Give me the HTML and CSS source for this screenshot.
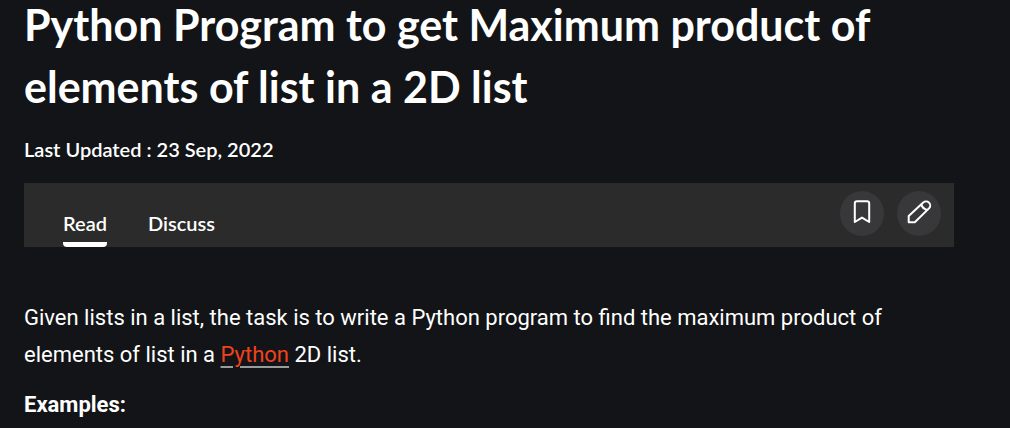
FILE: index.html
```html
<!DOCTYPE html>
<html lang="en">
<head>
<meta charset="utf-8">
<meta name="viewport" content="width=device-width, initial-scale=1">
<title>Python Program to get Maximum product of elements of list in a 2D list</title>
<link rel="stylesheet" href="styles.css">
</head>
<body>
<main class="article">
  <h1 class="title">Python Program to get Maximum product of elements of list in a 2D list</h1>
  <p class="updated">Last Updated : 23 Sep, 2022</p>
  <div class="toolbar">
    <nav class="tabs">
      <a class="tab tab-active" href="#read">Read</a>
      <a class="tab" href="#discuss">Discuss</a>
    </nav>
    <div class="actions">
      <button class="action" type="button" aria-label="Bookmark">
        <svg class="icon" viewBox="0 0 26 26" aria-hidden="true"><path d="M5.8 23V4.4q0-2.2 2.2-2.2h10q2.2 0 2.2 2.2V23L13 18.6z"/></svg>
      </button>
      <button class="action" type="button" aria-label="Edit">
        <svg class="icon" viewBox="0 0 26 26" aria-hidden="true"><path d="M2.7 23.3V17L17.2 3.6a4.1 4.1 0 0 1 5.8 5.8L8.8 23.3zM15.4 5.3q.8 4.4 6 5.7"/></svg>
      </button>
    </div>
  </div>
  <section class="content" id="read">
    <p class="text">Given lists in a list, the task is to write a Python program to find the maximum product of elements of list in a <a class="link" href="#python">Python</a> 2D list.</p>
    <p class="text"><strong>Examples:</strong></p>
  </section>
</main>
</body>
</html>
```
FILE: styles.css
```css
* {
  box-sizing: border-box;
}

body {
  margin: 0;
  background: #131417;
  color: #fff;
  font-family: Lato, "Liberation Sans", sans-serif;
}

.article {
  padding: 0 56px 0 24px;
}

.title {
  margin: -6px 0 0;
  padding-bottom: 14px;
  font-size: 43px;
  font-weight: 700;
  line-height: 62px;
}

.updated {
  margin: 0;
  padding: 5px 0 21px;
  font-size: 20px;
  font-weight: 600;
  line-height: 25px;
}

.toolbar {
  display: flex;
  justify-content: space-between;
  align-items: stretch;
  height: 64px;
  padding: 0 13px 0 39px;
  background: #2b2b2b;
}

.tabs {
  display: flex;
  align-items: flex-end;
  gap: 41px;
}

.tab {
  padding-bottom: 6px;
  border-bottom: 5px solid transparent;
  border-radius: 0 0 4px 4px;
  color: #fff;
  font-size: 20px;
  font-weight: 600;
  line-height: 25px;
  text-decoration: none;
}

.tab-active {
  border-bottom-color: #fff;
}

.actions {
  display: flex;
  align-items: center;
  gap: 13px;
  padding-bottom: 3px;
}

.action {
  display: flex;
  align-items: center;
  justify-content: center;
  width: 44px;
  height: 45px;
  padding: 0 0 3px;
  border: 0;
  border-radius: 50%;
  background: #38383a;
}

.icon {
  width: 26px;
  height: 26px;
  fill: none;
  stroke: #fff;
  stroke-width: 2;
  stroke-linejoin: round;
}

.content {
  padding-top: 52px;
  font-family: Roboto, "Liberation Sans", sans-serif;
}

.text {
  margin: 0 0 13px;
  font-size: 22px;
  line-height: 37px;
}

.link {
  color: #f0421d;
  text-decoration: underline #999c99 2px;
  text-underline-offset: 4px;
}
```
